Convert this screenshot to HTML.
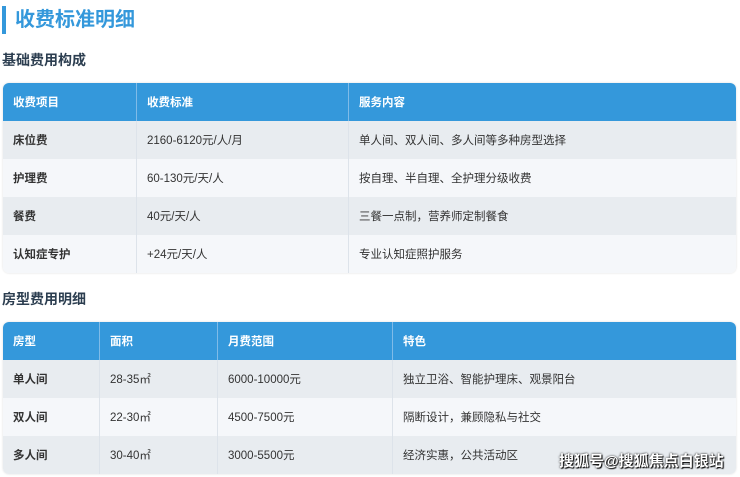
<!DOCTYPE html>
<html><head><meta charset="utf-8"><style>
body{margin:0;width:740px;height:477px;background:#fff;font-family:"Liberation Sans","Noto Sans CJK SC",sans-serif;position:relative;overflow:hidden}
.t{position:absolute;left:2px;top:6px;border-left:4px solid #3498db;padding-left:9px;height:28px;line-height:28px;font-size:20px;font-weight:bold;color:#3498db}
.h{position:absolute;left:2px;font-size:14px;font-weight:bold;color:#2c3e50}
table{position:absolute;left:3px;width:733px;border-collapse:separate;border-spacing:0;border-radius:6px;overflow:hidden;font-size:11.5px;color:#333;box-shadow:0 0 2px #ddd}
td,th{height:38px;padding:0 0 0 10px;text-align:left;border-right:1px solid #dde3ea;box-sizing:border-box}
td:last-child,th:last-child{border-right:none}
th{background:#3498db;color:#fff;font-weight:bold;border-right-color:#7fbbe8}
tr:nth-child(odd) td{background:#f5f7fa}
tr:nth-child(even) td{background:#e8ecf0}
td:first-child{font-weight:bold;color:#333}
.w{position:absolute;left:559px;top:450px;font-size:15px;font-weight:bold;color:#fff;text-shadow:0 0 2px #000,1px 1px 1px #000}
</style></head><body>
<div class="t">收费标准明细</div>
<div class="h" style="top:50px">基础费用构成</div>
<table style="top:83px">
<tr><th style="width:134px">收费项目</th><th style="width:212px">收费标准</th><th>服务内容</th></tr>
<tr><td>床位费</td><td>2160-6120元/人/月</td><td>单人间、双人间、多人间等多种房型选择</td></tr>
<tr><td>护理费</td><td>60-130元/天/人</td><td>按自理、半自理、全护理分级收费</td></tr>
<tr><td>餐费</td><td>40元/天/人</td><td>三餐一点制，营养师定制餐食</td></tr>
<tr><td>认知症专护</td><td>+24元/天/人</td><td>专业认知症照护服务</td></tr>
</table>
<div class="h" style="top:289px">房型费用明细</div>
<table style="top:322px">
<tr><th style="width:97px">房型</th><th style="width:118px">面积</th><th style="width:175px">月费范围</th><th>特色</th></tr>
<tr><td>单人间</td><td>28-35㎡</td><td>6000-10000元</td><td>独立卫浴、智能护理床、观景阳台</td></tr>
<tr><td>双人间</td><td>22-30㎡</td><td>4500-7500元</td><td>隔断设计，兼顾隐私与社交</td></tr>
<tr><td style="height:36px">多人间</td><td>30-40㎡</td><td>3000-5500元</td><td>经济实惠，公共活动区</td></tr>
</table>
<div class="w">搜狐号@搜狐焦点白银站</div>
</body></html>
